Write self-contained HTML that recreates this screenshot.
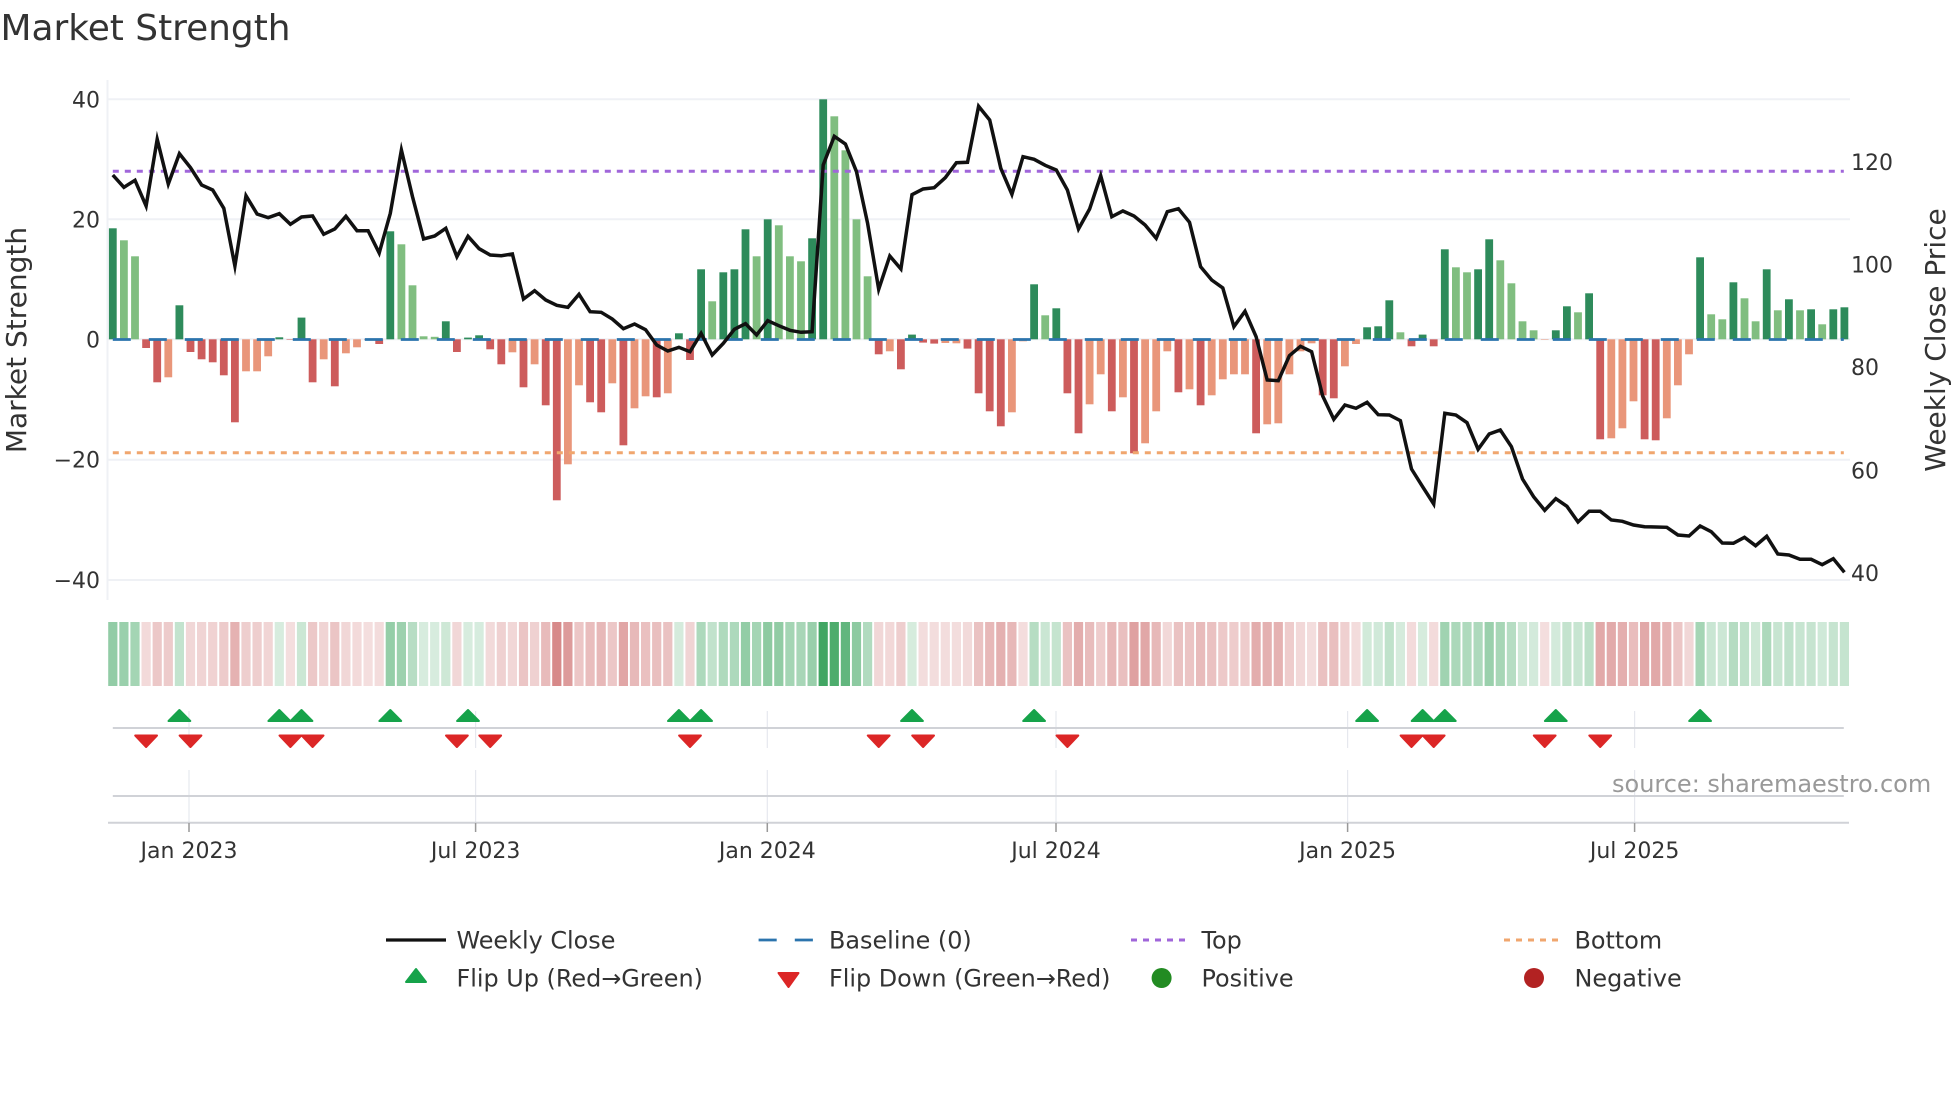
<!DOCTYPE html>
<html><head><meta charset="utf-8"><title>Market Strength</title>
<style>
html,body{margin:0;padding:0;background:#fff;width:1960px;height:1102px;overflow:hidden}
svg{display:block}
text{font-family:"DejaVu Sans","Liberation Sans",sans-serif;fill:#333}
.t{font-size:22px}.l{font-size:23.9px}.a{font-size:28px}
</style></head><body>
<svg id="c" xmlns="http://www.w3.org/2000/svg" width="1960" height="1102" viewBox="0 0 1960 1102">
<rect width="1960" height="1102" fill="#fff"/>
<g stroke="#eff1f5" stroke-width="2"><line x1="107.5" y1="80" x2="107.5" y2="600"/>
<line x1="107" y1="99.3" x2="1850" y2="99.3"/><line x1="107" y1="219.3" x2="1850" y2="219.3"/><line x1="107" y1="339.3" x2="1850" y2="339.3"/><line x1="107" y1="459.8" x2="1850" y2="459.8"/><line x1="107" y1="580" x2="1850" y2="580"/></g>
<g id="heat"></g><g id="bars"></g>
<line x1="112.8" y1="339.5" x2="1843.8" y2="339.5" stroke="#2b74ad" stroke-width="2.8" stroke-dasharray="18 18"/>
<line x1="112.8" y1="171.3" x2="1843.8" y2="171.3" stroke="#a066da" stroke-width="3" stroke-dasharray="6 6"/>
<line x1="112.8" y1="452.7" x2="1843.8" y2="452.7" stroke="#f0a66e" stroke-width="3" stroke-dasharray="6 6"/>
<polyline id="close" fill="none" stroke="#111" stroke-width="3.5" stroke-linejoin="miter" stroke-miterlimit="6" points=""/>
<g stroke="#e6e8ee" stroke-width="1.2">
<path d="M189 711V748M189 770V823M475.6 711V748M475.6 770V823M767.3 711V748M767.3 770V823M1056 711V748M1056 770V823M1347.6 711V748M1347.6 770V823M1634.6 711V748M1634.6 770V823"/></g>
<g stroke="#d0d2d7" stroke-width="2"><line x1="112.8" y1="728" x2="1843.8" y2="728"/><line x1="112.8" y1="796" x2="1843.8" y2="796"/><line x1="108" y1="822.7" x2="1849" y2="822.7"/></g>
<path d="M189 823V832M475.6 823V832M767.3 823V832M1056 823V832M1347.6 823V832M1634.6 823V832" stroke="#999" stroke-width="1.5"/>
<g id="flips"></g>
<text x="0.5" y="40" font-size="35.9">Market Strength</text>
<g class="t" text-anchor="end"><text class="t" x="100" y="107.3">40</text><text class="t" x="100" y="227.3">20</text><text class="t" x="100" y="347.3">0</text><text class="t" x="100" y="467.6">−20</text><text class="t" x="100" y="588">−40</text></g>
<g><text class="t" x="1851" y="170">120</text><text class="t" x="1851" y="272.5">100</text><text class="t" x="1851" y="375">80</text><text class="t" x="1851" y="478.5">60</text><text class="t" x="1851" y="581">40</text></g>
<text class="a" transform="translate(26,340) rotate(-90)" text-anchor="middle">Market Strength</text>
<text class="a" transform="translate(1945,340) rotate(-90)" text-anchor="middle">Weekly Close Price</text>
<g text-anchor="middle"><text class="t" x="189" y="858">Jan 2023</text><text class="t" x="475.6" y="858">Jul 2023</text><text class="t" x="767.3" y="858">Jan 2024</text><text class="t" x="1056" y="858">Jul 2024</text><text class="t" x="1347.6" y="858">Jan 2025</text><text class="t" x="1634.6" y="858">Jul 2025</text></g>
<text x="1612" y="792" font-size="24" style="fill:#999">source: sharemaestro.com</text>
<line x1="386" y1="940" x2="446" y2="940" stroke="#111" stroke-width="3.2"/>
<text class="l" x="456.5" y="948.5">Weekly Close</text>
<path d="M758.6 940H776.7M794.8 940H812.9" stroke="#2b74ad" stroke-width="2.8"/>
<text class="l" x="829" y="948.5">Baseline (0)</text>
<line x1="1131" y1="940" x2="1186" y2="940" stroke="#a066da" stroke-width="3" stroke-dasharray="6 6"/>
<text class="l" x="1201.5" y="948.5">Top</text>
<line x1="1504" y1="940" x2="1559" y2="940" stroke="#f0a66e" stroke-width="3" stroke-dasharray="6 6"/>
<text class="l" x="1574.5" y="948.5">Bottom</text>
<polygon points="416,969 406,982 426,982" fill="#16a34a" stroke="#16a34a" stroke-width="2" stroke-linejoin="round"/>
<text class="l" x="456.5" y="986.5">Flip Up (Red→Green)</text>
<polygon points="788.5,987 778.5,973 798.5,973" fill="#dc2626" stroke="#dc2626" stroke-width="2" stroke-linejoin="round"/>
<text class="l" x="829" y="986.5">Flip Down (Green→Red)</text>
<circle cx="1161.6" cy="978" r="10" fill="#228b22"/>
<text class="l" x="1201.5" y="986.5">Positive</text>
<circle cx="1534" cy="978" r="10" fill="#b22222"/>
<text class="l" x="1574.5" y="986.5">Negative</text>
</svg>
<script>
var B="d111 l99 l83 r8.7 r43 s38 d34 r12.7 r20 r23 r36 r83 s32 s32 s17 d2 r.5 d21.7 r43 s20 r47 s14 s8 r.5 r4.7 d108 l95 l54 l3 l2.5 d18 r12.7 d1.7 d4 r10 r25 s13 r48 s25 r66 r161 s125 s46 r63 r73 s44 r106 s69 s57 r58 s54 d6 r20.7 d70 l38 d67 d70 d110 l83 d120 l114 l83 l78 d101 d240 l223 l189 l120 l63 r15 s12 r30 d4.7 r3.3 r4.3 s3.7 s4 r9.3 r54 r72 r87 s73 s2 d55 l24 d31 r54 r94 s65 s35 r72 s58 r114 s104 s72 s12 r53 s50 r66 s56 s40 s35 s35 r94 s85 s84 s35 s12 s4 r56 r59 s27 s4.7 d12 d13 d39 l7 r7 d4.7 r7 d90 l72 l67 d70 d100 l79 l56 l18 l9 s.5 d9 d33 l27 d46 r100 s99 s89 s62 r100 r101 s79 s46 s15 d82 l25 l20 d57 l41 l18 d70 l29 d40 l29 d30 l15 d30 d32".split(" ");
var Y=[175,187.3,180.3,206,139.3,184,153.7,167.7,185,190,208.3,266,195.7,214,217.7,213.7,224.3,217,216,234.3,229,216.3,230.7,230.7,253,213.3,150,196.7,239,236,228.3,256.7,236.3,248.7,255,255.7,254,299,290.7,300,305.3,307.3,294.3,311.7,312.3,319,328.7,324,329.7,345,351,347.3,351.7,333.3,355,343.3,329.3,323.7,335,320.7,325.7,330.3,332.3,331.7,165,136.3,144,171.7,223.3,289.3,256,269,194.7,189,187.7,177.7,162.7,162.3,106.3,120,168.3,194.3,156.7,159.3,165.3,170,190,229,209,175.7,216.7,211,216,225,238.3,211.7,208.7,222.3,266.7,280,288,326.7,311.3,336.7,380,380.7,355.7,346.3,351.7,396,419.3,405,408.3,402.3,414.7,415,420.7,469,486.7,504,413.3,415,422.7,449.3,434,430,446.7,479,496.7,510.3,498.7,506.3,522,511.3,511.3,520,521.3,525,526.7,527,527.3,535,536,526,531.7,543,543.3,537.3,545.7,536.3,554,555,559.3,559.3,564.7,558.7,572.3];
var C={d:"#2e8b5b",l:"#80be80",r:"#cd5c5c",s:"#e9967a"},h="",b="",p=[];
function X(i){return 112.8+11.1*i}
B.forEach(function(v,i){
 var k=v[0],m=parseFloat(v.slice(1)),x=X(i),pos=(k=="d"||k=="l");
 var a=Math.min(.17+m*.0028,1).toFixed(3);
 h+='<rect x="'+(x-4.6).toFixed(2)+'" y="622" width="9.2" height="64" fill="'+(pos?"rgb(30,150,70)":"rgb(190,64,64)")+'" fill-opacity="'+a+'"/>';
 b+='<rect x="'+(x-3.9).toFixed(2)+'" y="'+(pos?(339.3-m).toFixed(1):"339.3")+'" width="7.8" height="'+m+'" fill="'+C[k]+'"/>';
 p.push(x.toFixed(1)+","+Y[i]);
});
document.getElementById("heat").innerHTML=h;
document.getElementById("bars").innerHTML=b;
document.getElementById("close").setAttribute("points",p.join(" "));
var f="";
[6,15,17,25,32,51,53,72,83,113,118,120,130,143].forEach(function(i){var x=X(i);
 f+='<polygon points="'+x.toFixed(1)+',710 '+(x-10.9).toFixed(1)+',721 '+(x+10.9).toFixed(1)+',721" fill="#16a34a" stroke="#16a34a" stroke-width="2" stroke-linejoin="round"/>';});
[3,7,16,18,31,34,52,69,73,86,117,119,129,134].forEach(function(i){var x=X(i);
 f+='<polygon points="'+x.toFixed(1)+',747 '+(x-10.9).toFixed(1)+',735.5 '+(x+10.9).toFixed(1)+',735.5" fill="#dc2626" stroke="#dc2626" stroke-width="2" stroke-linejoin="round"/>';});
document.getElementById("flips").innerHTML=f;
</script>
</body></html>
